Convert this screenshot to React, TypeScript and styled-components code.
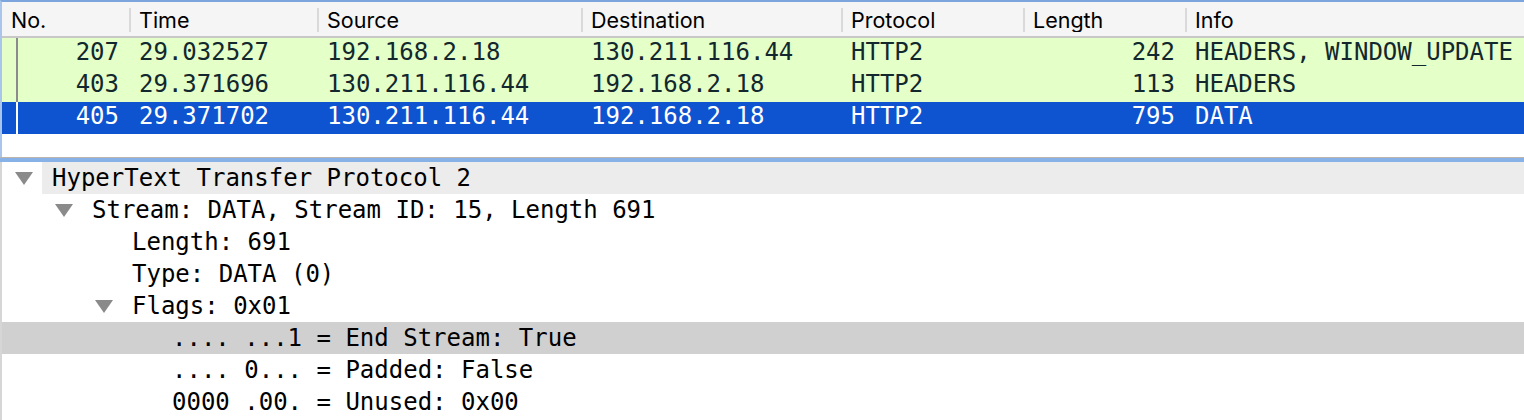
import React from "react";
import styled, { createGlobalStyle } from "styled-components";

const Global = createGlobalStyle`
  html, body {
    margin: 0;
    padding: 0;
    background: #ffffff;
    overflow: hidden;
  }
  body {
    width: 1524px;
    height: 420px;
  }
`;

const COLUMNS = "127px 188px 264px 260px 182px 162px 1fr";
const MONO = `"DejaVu Sans Mono", "Liberation Mono", monospace`;

const Window = styled.div`
  width: 1524px;
  height: 420px;
  display: flex;
  flex-direction: column;
  background: #ffffff;
  overflow: hidden;
`;

const PacketPane = styled.section`
  box-sizing: border-box;
  height: 157px;
  border-top: 2px solid #7ba5dc;
  border-left: 2px solid #a9c5ec;
  display: flex;
  flex-direction: column;
  background: #ffffff;
`;

const ListHeader = styled.div`
  display: grid;
  grid-template-columns: ${COLUMNS};
  padding: 6px 0 4px;
  background: #f5f5f5;
  border-bottom: 2px solid #c8c8c8;
`;

const HeaderCell = styled.div<{ $first?: boolean }>`
  height: 24px;
  line-height: 24px;
  padding-left: ${(p) => (p.$first ? "9px" : "8px")};
  border-left: ${(p) => (p.$first ? "none" : "2px solid #dadada")};
  font-family: Inter, "Liberation Sans", sans-serif;
  font-size: 21.5px;
  color: #000000;
  white-space: nowrap;
  overflow: hidden;
`;

const PacketRow = styled.div<{ $selected?: boolean }>`
  display: grid;
  grid-template-columns: ${COLUMNS};
  height: 32px;
  background: ${(p) => (p.$selected ? "#0e53d0" : "#e4ffc7")};
  color: ${(p) => (p.$selected ? "#ffffff" : "#12272e")};
  font-family: ${MONO};
  font-size: 24px;
`;

const Cell = styled.div<{ $right?: boolean }>`
  box-sizing: border-box;
  height: 32px;
  line-height: 28px;
  padding: 0 10px 4px;
  text-align: ${(p) => (p.$right ? "right" : "left")};
  white-space: nowrap;
  overflow: hidden;
`;

const NumberCell = styled.div`
  display: flex;
  height: 32px;
  padding-left: 14px;
  padding-right: 10px;
`;

const RelationMark = styled.span<{ $selected?: boolean }>`
  width: 2px;
  align-self: stretch;
  background: ${(p) => (p.$selected ? "#ffffff" : "#8c8c8c")};
`;

const NumberText = styled.span`
  flex: 1;
  text-align: right;
  line-height: 28px;
  padding-bottom: 4px;
`;

const Splitter = styled.div`
  height: 4px;
  border-top: 1px solid #bcb4ad;
  background: #87b2e8;
`;

const DetailPane = styled.section`
  flex: 1;
  border-left: 2px solid #d6d6d6;
  display: flex;
  flex-direction: column;
  font-family: ${MONO};
  font-size: 24px;
  color: #000000;
`;

const TreeRow = styled.div<{ $level: number; $selected?: boolean }>`
  display: flex;
  align-items: stretch;
  height: 32px;
  flex-shrink: 0;
  padding-left: ${(p) => 13 + p.$level * 40}px;
  background: ${(p) => (p.$selected ? "#d0d0d0" : "transparent")};
`;

const Toggle = styled.span`
  width: 18px;
  display: flex;
  align-items: center;
  justify-content: center;
  flex-shrink: 0;
  padding-top: 1px;
`;

const Label = styled.span<{ $parent?: boolean }>`
  flex: 1;
  margin-left: 9px;
  padding-left: 10px;
  line-height: 31px;
  padding-top: 1px;
  white-space: pre;
  background: ${(p) => (p.$parent ? "#ececec" : "transparent")};
`;

const Triangle = () => (
  <svg width="18" height="13" viewBox="0 0 18 13" aria-hidden="true">
    <polygon points="0,0 18,0 9,13" fill="#8a8a8a" />
  </svg>
);

type Packet = {
  no: string;
  time: string;
  src: string;
  dst: string;
  proto: string;
  len: string;
  info: string;
  selected?: boolean;
};

const packets: Packet[] = [
  { no: "207", time: "29.032527", src: "192.168.2.18", dst: "130.211.116.44", proto: "HTTP2", len: "242", info: "HEADERS, WINDOW_UPDATE" },
  { no: "403", time: "29.371696", src: "130.211.116.44", dst: "192.168.2.18", proto: "HTTP2", len: "113", info: "HEADERS" },
  { no: "405", time: "29.371702", src: "130.211.116.44", dst: "192.168.2.18", proto: "HTTP2", len: "795", info: "DATA", selected: true },
];

type Node = { level: number; text: string; expanded?: boolean; parent?: boolean; selected?: boolean };

const tree: Node[] = [
  { level: 0, text: "HyperText Transfer Protocol 2", expanded: true, parent: true },
  { level: 1, text: "Stream: DATA, Stream ID: 15, Length 691", expanded: true },
  { level: 2, text: "Length: 691" },
  { level: 2, text: "Type: DATA (0)" },
  { level: 2, text: "Flags: 0x01", expanded: true },
  { level: 3, text: ".... ...1 = End Stream: True", selected: true },
  { level: 3, text: ".... 0... = Padded: False" },
  { level: 3, text: "0000 .00. = Unused: 0x00" },
];

const headers = ["No.", "Time", "Source", "Destination", "Protocol", "Length", "Info"];

export default function App() {
  return (
    <>
      <Global />
      <Window>
        <PacketPane>
          <ListHeader>
            {headers.map((h, i) => (
              <HeaderCell key={h} $first={i === 0}>
                {h}
              </HeaderCell>
            ))}
          </ListHeader>
          {packets.map((p) => (
            <PacketRow key={p.no} $selected={p.selected}>
              <NumberCell>
                <RelationMark $selected={p.selected} />
                <NumberText>{p.no}</NumberText>
              </NumberCell>
              <Cell>{p.time}</Cell>
              <Cell>{p.src}</Cell>
              <Cell>{p.dst}</Cell>
              <Cell>{p.proto}</Cell>
              <Cell $right>{p.len}</Cell>
              <Cell>{p.info}</Cell>
            </PacketRow>
          ))}
        </PacketPane>
        <Splitter />
        <DetailPane>
          {tree.map((n, i) => (
            <TreeRow key={i} $level={n.level} $selected={n.selected}>
              <Toggle>{n.expanded ? <Triangle /> : null}</Toggle>
              <Label $parent={n.parent}>{n.text}</Label>
            </TreeRow>
          ))}
        </DetailPane>
      </Window>
    </>
  );
}
